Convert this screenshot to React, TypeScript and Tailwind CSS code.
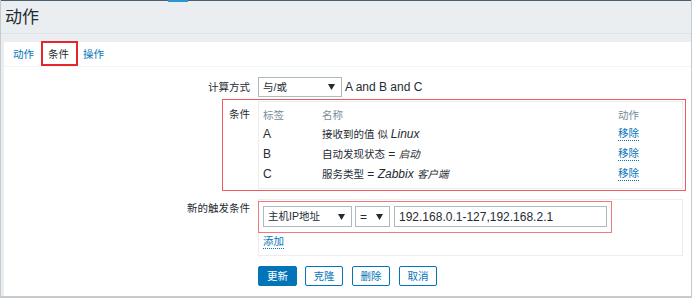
import React from "react";

const Z = ({ children, className = "" }: { children: React.ReactNode; className?: string }) => (
  <span className={"text-[10.5px] " + className}>{children}</span>
);

const Arrow = () => (
  <svg width="7" height="6" viewBox="0 0 7 6" className="shrink-0">
    <path d="M0 0H7L3.5 6Z" fill="#1f2c33" />
  </svg>
);

const Link = ({ children }: { children: React.ReactNode }) => (
  <span className="inline-block text-[10.5px] leading-[13px] text-[#0275b8] border-b border-dotted border-[#0275b8]">
    {children}
  </span>
);

export default function App() {
  const rows = [
    { tag: "A", name: (<><Z>接收到的值 似 </Z><i>Linux</i></>) },
    { tag: "B", name: (<><Z>自动发现状态</Z> = <Z className="italic">启动</Z></>) },
    { tag: "C", name: (<><Z>服务类型</Z> = <i>Zabbix </i><Z className="italic">客户端</Z></>) },
  ];
  return (
    <div className="w-[694px] h-[300px] bg-white relative font-['Liberation_Sans','Noto_Sans_CJK_SC',sans-serif] text-[12px] text-[#1f2c33] leading-none overflow-hidden">
      <div className="w-[692px] h-[298px] border-l border-r border-b-2 border-[#c4cbcf] bg-[#ebeef0] flex flex-col">
        <div className="h-[1px] bg-[#4b5e6b] shrink-0" />
        <div className="h-[33px] border-b border-[#dde2e6] flex items-center pl-[4px] shrink-0">
          <span className="text-[17px] leading-none">动作</span>
        </div>
        <div className="h-[8px] shrink-0" />
        <div className="ml-[3px] h-[24px] bg-white flex items-center pl-[9px] gap-[14px] shrink-0">
          <Z className="text-[#0275b8]">动作</Z>
          <Z>条件</Z>
          <Z className="text-[#0275b8]">操作</Z>
        </div>
        <div className="h-[1px] ml-[3px] bg-[#f3f4f5] shrink-0" />
        <div className="flex-1 ml-[3px] bg-white pt-[10px]">
          <div className="grid grid-cols-[246px_1fr] gap-x-[8px]">
            {/* Row 1 */}
            <div className="flex items-center justify-end h-[20px]">
              <Z>计算方式</Z>
            </div>
            <div className="flex items-center h-[20px]">
              <div className="w-[84px] h-[20px] border border-[#acbbc2] bg-white flex items-center justify-between pl-[4px] pr-[6px]">
                <Z>与/或</Z>
                <Arrow />
              </div>
              <span className="ml-[3px]">A and B and C</span>
            </div>

            {/* Row 2 */}
            <div className="flex justify-end pt-[6px] mt-[4px]">
              <Z className="leading-[14px]">条件</Z>
            </div>
            <div className="mt-[4px]">
              <div className="w-[425px] h-[88px] border border-[#ebeef0] px-[4px] pt-[4px]">
                <div className="flex items-center h-[18px] text-[#768d99]">
                  <div className="w-[59px]"><Z>标签</Z></div>
                  <div className="w-[296px]"><Z>名称</Z></div>
                  <div><Z>动作</Z></div>
                </div>
                {rows.map((r) => (
                  <div key={r.tag} className="flex items-center h-[20px]">
                    <div className="w-[59px]">{r.tag}</div>
                    <div className="w-[296px] whitespace-nowrap">{r.name}</div>
                    <div><Link>移除</Link></div>
                  </div>
                ))}
              </div>
            </div>

            {/* Row 3 */}
            <div className="flex justify-end pt-[2px] mt-[10px]">
              <Z className="leading-[14px]">新的触发条件</Z>
            </div>
            <div className="mt-[10px]">
              <div className="w-[425px] h-[57px] border border-[#ebeef0] pl-[4px] pt-[6px]">
                <div className="flex items-center">
                  <div className="w-[89px] h-[21px] border border-[#acbbc2] bg-white flex items-center justify-between pl-[4px] pr-[6px]">
                    <Z>主机IP地址</Z>
                    <Arrow />
                  </div>
                  <div className="ml-[3px] w-[35px] h-[21px] border border-[#acbbc2] bg-white flex items-center justify-between pl-[4px] pr-[6px]">
                    <span>=</span>
                    <Arrow />
                  </div>
                  <div className="ml-[4px] w-[213px] h-[21px] border border-[#acbbc2] bg-white flex items-center pl-[4px]">
                    <span>192.168.0.1-127,192.168.2.1</span>
                  </div>
                </div>
                <div className="mt-[8px]">
                  <Link>添加</Link>
                </div>
              </div>
            </div>

            {/* Row 4 */}
            <div />
            <div className="mt-[10px] flex items-center">
              <button className="w-[39px] h-[20px] bg-[#0275b8] border border-[#0275b8] text-white flex items-center justify-center rounded-[2px]">
                <Z>更新</Z>
              </button>
              <button className="ml-[8px] w-[38px] h-[20px] bg-white border border-[#0275b8] text-[#0275b8] flex items-center justify-center rounded-[2px]">
                <Z>克隆</Z>
              </button>
              <button className="ml-[9px] w-[38px] h-[20px] bg-white border border-[#0275b8] text-[#0275b8] flex items-center justify-center rounded-[2px]">
                <Z>删除</Z>
              </button>
              <button className="ml-[9px] w-[38px] h-[20px] bg-white border border-[#0275b8] text-[#0275b8] flex items-center justify-center rounded-[2px]">
                <Z>取消</Z>
              </button>
            </div>
          </div>
        </div>
      </div>

      {/* overlays */}
      <div className="absolute left-[168px] top-0 w-[20px] h-[2px] bg-[#2e95d3]" />
      <div className="absolute left-[41px] top-[41px] w-[37px] h-[25px] border-2 border-[#e5262a]" />
      <div className="absolute left-[222px] top-[99px] w-[464px] h-[92px] border-[1.5px] border-[#ee5b5b]" />
      <div className="absolute left-[258px] top-[201px] w-[354px] h-[32px] border-[1.5px] border-[#f07a7a]" />
    </div>
  );
}
